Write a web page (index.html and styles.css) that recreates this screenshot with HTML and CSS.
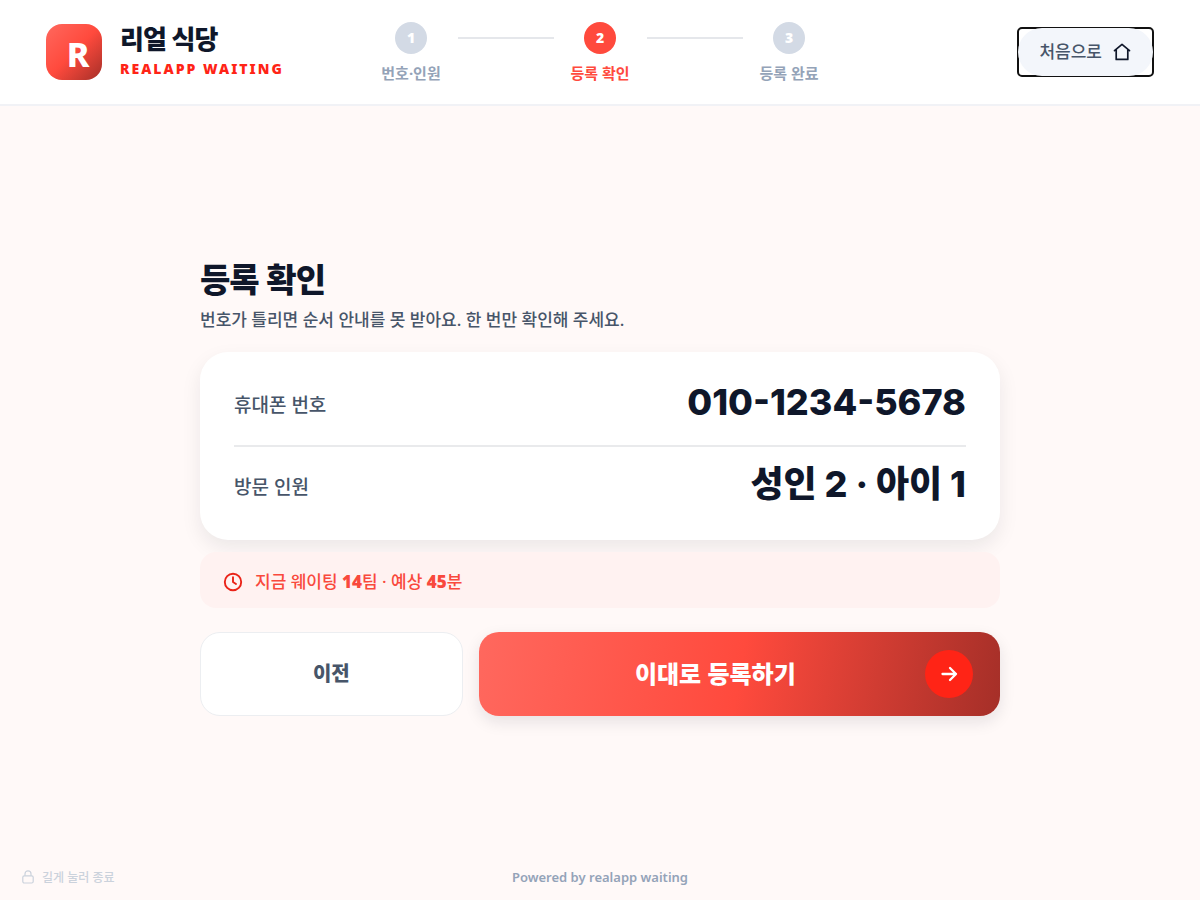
FILE: index.html
```
<!DOCTYPE html>
<html lang="ko">
<head>
    <meta charset="UTF-8">
    <meta name="viewport" content="width=device-width, initial-scale=1.0">
    <title>리얼 식당 - 등록 확인</title>
    <link rel="stylesheet" href="styles.css">
</head>
<body>
    <header class="header">
        <div class="brand">
            <div class="brand-logo">R</div>
            <div class="brand-text">
                <div class="brand-name">리얼 식당</div>
                <div class="brand-sub">REALAPP WAITING</div>
            </div>
        </div>

        <ol class="steps">
            <li class="step">
                <span class="step-number">1</span>
                <span class="step-label">번호·인원</span>
            </li>
            <li class="step-line" role="presentation"></li>
            <li class="step active" aria-current="step">
                <span class="step-number">2</span>
                <span class="step-label">등록 확인</span>
            </li>
            <li class="step-line" role="presentation"></li>
            <li class="step">
                <span class="step-number">3</span>
                <span class="step-label">등록 완료</span>
            </li>
        </ol>

        <button class="home-button" type="button">
            <span class="home-pill">
                처음으로
                <svg width="20" height="20" viewBox="0 0 20 20" fill="none" stroke="#0f172a" stroke-width="1.7" stroke-linecap="round" stroke-linejoin="round" aria-hidden="true">
                    <path d="M2.5 8.6 10 2.3l7.5 6.3M4.2 7.8V17.4h11.6V7.8"/>
                </svg>
            </span>
        </button>
    </header>

    <main class="main">
        <div class="content">
            <h1 class="title">등록 확인</h1>
            <p class="subtitle">번호가 틀리면 순서 안내를 못 받아요. 한 번만 확인해 주세요.</p>

            <dl class="card">
                <div class="card-row">
                    <dt>휴대폰 번호</dt>
                    <dd>010-1234-5678</dd>
                </div>
                <div class="card-row">
                    <dt>방문 인원</dt>
                    <dd>성인 2 · 아이 1</dd>
                </div>
            </dl>

            <div class="notice">
                <svg width="20" height="20" viewBox="0 0 20 20" fill="none" stroke="#ea2318" stroke-width="1.9" stroke-linecap="round" stroke-linejoin="round" aria-hidden="true">
                    <circle cx="10" cy="10" r="8.2"/>
                    <path d="M10 5.2V10l3 2"/>
                </svg>
                <span>지금 웨이팅 <b>14</b>팀 · 예상 <b>45</b>분</span>
            </div>

            <div class="actions">
                <button class="prev-button" type="button">이전</button>
                <button class="next-button" type="button">
                    <span class="next-label">이대로 등록하기</span>
                    <span class="next-arrow">
                        <svg width="24" height="24" viewBox="0 0 24 24" fill="none" stroke="#fff" stroke-width="2.3" stroke-linecap="round" stroke-linejoin="round" aria-hidden="true">
                            <path d="M5.5 12H19M13 6l6 6-6 6"/>
                        </svg>
                    </span>
                </button>
            </div>
        </div>
    </main>

    <footer class="footer">
        <button class="exit-button" type="button">
            <svg width="12" height="14" viewBox="0 0 12 14" fill="none" stroke="currentColor" stroke-width="1.2" stroke-linejoin="round" aria-hidden="true">
                <rect x="0.8" y="5.8" width="10.4" height="7.2" rx="1.5"/>
                <path d="M3 5.8V3.8a3 3 0 0 1 6 0v2"/>
            </svg>
            길게 눌러 종료
        </button>
        <span class="powered">Powered by realapp waiting</span>
    </footer>
</body>
</html>
```
FILE: styles.css
```
* {
    box-sizing: border-box;
}

body {
    font-family: "Noto Sans", "Noto Sans CJK KR", sans-serif;
    background-color: #fff9f8;
    color: #0f172a;
    margin: 0;
    min-height: 100vh;
    display: flex;
    flex-direction: column;
}

button {
    font-family: inherit;
    cursor: pointer;
}

svg {
    display: block;
    flex-shrink: 0;
}

/* header */
.header {
    display: grid;
    grid-template-columns: 1fr auto 1fr;
    align-items: center;
    min-height: 106px;
    padding: 0 46px;
    background-color: white;
    border-bottom: 2px solid #f1f2f6;
}

.brand {
    display: flex;
    align-items: center;
    gap: 18px;
}

.brand-logo {
    width: 56px;
    height: 56px;
    padding: 4px 0 0 8px;
    display: flex;
    align-items: center;
    justify-content: center;
    border-radius: 16px;
    background: linear-gradient(135deg, #ff685e 0%, #ff4a3d 50%, #a52f28 100%);
    color: white;
    font-size: 34px;
    font-weight: 800;
}

.brand-name {
    font-size: 26px;
    font-weight: 900;
    line-height: 32px;
    letter-spacing: -1px;
}

.brand-sub {
    margin-top: 2px;
    color: #ff2416;
    font-size: 14px;
    font-weight: 900;
    line-height: 24px;
    letter-spacing: 2px;
}

.steps {
    display: flex;
    gap: 16px;
    margin: 0;
    padding: 0;
    list-style: none;
}

.step {
    min-width: 61px;
    display: flex;
    flex-direction: column;
    align-items: center;
    gap: 9px;
    color: #94a3b8;
}

.step-number {
    width: 32px;
    height: 32px;
    display: flex;
    align-items: center;
    justify-content: center;
    border-radius: 50%;
    background-color: #d3dae5;
    color: white;
    font-size: 14px;
    font-weight: 900;
}

.step-label {
    font-size: 15px;
    font-weight: 700;
    line-height: 20px;
}

.step.active {
    color: #ff4a3d;
}

.step.active .step-number {
    background-color: #ff4a3d;
}

.step-line {
    width: 96px;
    height: 2px;
    margin-top: 15px;
    background-color: #e5e7eb;
}

.home-button {
    justify-self: end;
    padding: 0;
    border: 2px solid #111;
    border-radius: 5px;
    background-color: white;
}

.home-pill {
    display: flex;
    align-items: center;
    gap: 10px;
    margin: -1px;
    padding: 12px 21px;
    border-radius: 24px;
    background-color: #f3f6fb;
    color: #475569;
    font-size: 17px;
    font-weight: 500;
    line-height: 24px;
}

/* content */
.main {
    flex: 1;
    display: flex;
    align-items: center;
    justify-content: center;
    padding: 40px 24px 24px;
}

.content {
    width: 100%;
    max-width: 800px;
}

.title {
    margin: 0;
    font-size: 33px;
    font-weight: 900;
    line-height: 40px;
    letter-spacing: -1px;
}

.subtitle {
    margin: 8px 0 20px;
    color: #475569;
    font-size: 17px;
    font-weight: 500;
    line-height: 24px;
}

.card {
    margin: 0 0 12px;
    padding: 13px 34px;
    border-radius: 28px;
    background-color: white;
    box-shadow: 0 8px 20px rgba(15, 23, 42, 0.08);
}

.card-row {
    display: flex;
    align-items: center;
    justify-content: space-between;
    padding: 13px 0 19px;
}

.card-row + .card-row {
    border-top: 2px solid #e9eaec;
}

.card-row dt {
    padding-top: 4px;
    color: #475569;
    font-size: 19px;
    font-weight: 500;
}

.card-row dd {
    margin: 0;
    font-family: Inter, "Noto Sans CJK KR", sans-serif;
    font-size: 36px;
    font-weight: 800;
    line-height: 48px;
}

.notice {
    display: flex;
    align-items: center;
    gap: 12px;
    margin-bottom: 24px;
    padding: 18px 23px 14px;
    border-radius: 16px;
    background-color: #fff2f1;
    color: #f9493d;
    font-size: 17px;
    font-weight: 500;
    line-height: 24px;
}

.notice b {
    font-weight: 900;
}

.actions {
    display: flex;
    gap: 16px;
}

.prev-button,
.next-button {
    height: 84px;
    padding: 0 0 4px;
    border-radius: 20px;
    font-size: 24px;
    font-weight: 900;
}

.prev-button {
    flex: 1 1 0;
    border: 1px solid #eceef1;
    background-color: white;
    color: #475569;
    font-size: 20px;
}

.next-button {
    position: relative;
    flex: 2 1 0;
    border: none;
    background: linear-gradient(100deg, #ff685e 0%, #ff4a3d 50%, #a52f28 100%);
    box-shadow: 0 6px 16px rgba(15, 23, 42, 0.1);
    color: white;
}

.next-label {
    margin-right: 48px;
}

.next-arrow {
    position: absolute;
    top: 18px;
    right: 27px;
    width: 48px;
    height: 48px;
    display: flex;
    align-items: center;
    justify-content: center;
    border-radius: 50%;
    background-color: #ff2416;
}

/* footer */
.footer {
    display: grid;
    grid-template-columns: 1fr auto 1fr;
    align-items: center;
    min-height: 46px;
    padding: 0 22px;
}

.exit-button {
    justify-self: start;
    display: flex;
    align-items: center;
    gap: 8px;
    padding: 0;
    border: none;
    background: none;
    color: #cbd2dc;
    font-size: 12px;
    font-weight: 500;
}

.powered {
    color: #94a3b8;
    font-size: 13px;
    font-weight: 600;
}
```
